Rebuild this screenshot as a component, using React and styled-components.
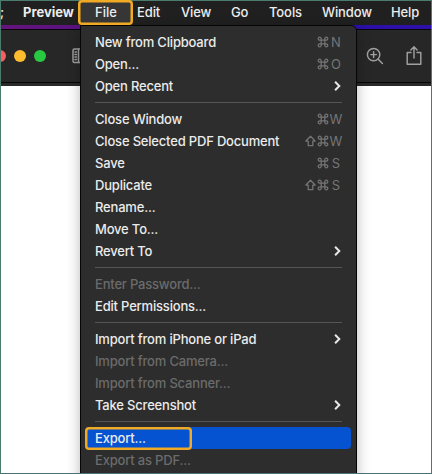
import React from "react";
import styled, { createGlobalStyle } from "styled-components";

const Global = createGlobalStyle`
  * { box-sizing: border-box; }
  body { margin: 0; overflow: hidden; font-family: Inter, "Liberation Sans", sans-serif; }
`;

const Screen = styled.main`
  position: relative;
  display: flex;
  flex-direction: column;
  width: 432px;
  height: 474px;
  overflow: hidden;
  background: #fff;
`;

const Frame = styled.div`
  position: absolute;
  inset: 0;
  border: 1px solid #4b7b6f;
  border-bottom-color: #4a7377;
  pointer-events: none;
`;

const MenuBar = styled.nav`
  display: flex;
  flex: none;
  height: 25px;
  background: #202020;
  color: #ececec;
  font-size: 13px;
  line-height: 25px;
  font-weight: 500;
  overflow: hidden;
`;

const BarItem = styled.span`
  flex: none;
  width: ${(p) => p.$width}px;
  font-weight: ${(p) => (p.$bold ? 700 : 500)};
  letter-spacing: ${(p) => (p.$bold ? 0 : -0.1)}px;
  white-space: nowrap;
`;

const Wallpaper = styled.div`
  flex: none;
  height: 5px;
  border-bottom: 1px solid #08040c;
  background: linear-gradient(90deg, #65147c 0, #5a1280 80px, #2c0fa6 355px, #2d10a8 100%);
`;

const Toolbar = styled.header`
  display: flex;
  align-items: center;
  flex: none;
  height: 53px;
  background: #272727;
  border-bottom: 1px solid #050505;
`;

const Light = styled.i`
  flex: none;
  width: 12px;
  height: 12px;
  margin-right: 8px;
  border-radius: 50%;
  background: ${(p) => p.$color};
`;

const Lights = styled.div`
  display: flex;
  width: 72px;
  margin-left: -6px;
`;

const ToolIcon = styled.svg`
  flex: none;
  margin-left: ${(p) => p.$gap}px;
  fill: none;
  stroke: #a0a0a0;
  stroke-width: 1.45;
  stroke-linecap: round;
  stroke-linejoin: round;
`;

const Edge = styled.div`
  flex: none;
  height: 3px;
  background: #292929;
`;

const Menu = styled.section`
  position: absolute;
  left: 80px;
  top: 25px;
  width: 277px;
  height: 460px;
  padding: 5px 5px 0;
  border: 1px solid #050505;
  border-radius: 0 6px 0 0;
  background: #2d2d2d;
  box-shadow: 0 4px 14px rgba(0, 0, 0, 0.28);
`;

const Row = styled.div`
  display: flex;
  align-items: center;
  height: 22px;
  padding: 0 8px 0 9px;
  border-radius: 4px;
  background: ${(p) => (p.$active ? "#0553d1" : "transparent")};
  color: ${(p) => (p.$disabled ? "#6b6b6b" : "#ebebeb")};
`;

const Label = styled.span`
  flex: 1;
  font-size: 13px;
  font-weight: 500;
  line-height: 22px;
  letter-spacing: -0.19px;
  white-space: nowrap;
`;

const Shortcut = styled.span`
  display: flex;
  align-items: center;
  color: #757575;
`;

const KeyLetter = styled.span`
  width: 14px;
  font-size: 13px;
  line-height: 22px;
  text-align: center;
`;

const KeyIcon = styled.svg`
  flex: none;
  fill: none;
  stroke: currentColor;
  stroke-width: 1.25;
`;

const Chevron = styled.svg`
  flex: none;
  margin-right: 2px;
  fill: none;
  stroke: #e8e8e8;
  stroke-width: 2;
`;

const Divider = styled.hr`
  height: 1px;
  margin: 5px 9px;
  border: 0;
  background: #565656;
`;

const Callout = styled.div`
  position: absolute;
  left: ${(p) => p.$left}px;
  top: ${(p) => p.$top}px;
  width: ${(p) => p.$width}px;
  height: ${(p) => p.$height}px;
  border-radius: 4px;
  box-shadow: inset 0 0 0 2.5px #f0aa23;
`;

const FileLit = styled.div`
  position: absolute;
  left: 80px;
  top: 1px;
  width: 52px;
  height: 23px;
  padding-left: 15px;
  background: #363636;
  color: #ececec;
  font-size: 13px;
  font-weight: 500;
  line-height: 23px;
`;

const bar = [
  ["Preview", 114, true],
  ["Edit", 44],
  ["View", 50],
  ["Go", 38],
  ["Tools", 53],
  ["Window", 69],
  ["Help", 41],
];

const items = [
  { t: "New from Clipboard", k: "N" },
  { t: "Open...", k: "O" },
  { t: "Open Recent", sub: true },
  null,
  { t: "Close Window", k: "W" },
  { t: "Close Selected PDF Document", k: "W", shift: true },
  { t: "Save", k: "S" },
  { t: "Duplicate", k: "S", shift: true },
  { t: "Rename..." },
  { t: "Move To..." },
  { t: "Revert To", sub: true },
  null,
  { t: "Enter Password...", off: true },
  { t: "Edit Permissions..." },
  null,
  { t: "Import from iPhone or iPad", sub: true },
  { t: "Import from Camera...", off: true },
  { t: "Import from Scanner...", off: true },
  { t: "Take Screenshot", sub: true },
  null,
  { t: "Export...", active: true },
  { t: "Export as PDF...", off: true },
];

const CommandKey = () => (
  <KeyIcon width="12" height="12" viewBox="0 0 12 12">
    <path d="M4.2 4.2h3.6v3.6H4.2zM4.2 4.2H2.8a1.5 1.5 0 1 1 1.4-1.5zM7.8 4.2V2.7a1.5 1.5 0 1 1 1.4 1.5zM7.8 7.8h1.4a1.5 1.5 0 1 1-1.4 1.5zM4.2 7.8v1.5a1.5 1.5 0 1 1-1.4-1.5z" />
  </KeyIcon>
);

const ShiftKey = () => (
  <KeyIcon width="12" height="12" viewBox="0 0 12 12">
    <path d="M5.5 1.2.9 6h2.3v4.7h4.6V6h2.3z" strokeLinejoin="round" />
  </KeyIcon>
);

export default function App() {
  return (
    <Screen>
      <Global />
      <MenuBar>
        <BarItem $width={23}>;</BarItem>
        {bar.map(([name, width, bold]) => (
          <BarItem key={name} $width={width} $bold={bold}>{name}</BarItem>
        ))}
      </MenuBar>
      <Wallpaper />
      <Toolbar>
        <Lights>
          <Light $color="#f9605c" />
          <Light $color="#fdbc2e" />
          <Light $color="#28c840" />
        </Lights>
        <ToolIcon $gap={6} width="18" height="16" viewBox="0 0 18 16">
          <rect x="1" y="1" width="16" height="13.5" rx="1.5" />
          <path d="M6.5 1v13.5M3 4h1.5M3 6.5h1.5M3 9h1.5M3 11.5h1.5" />
        </ToolIcon>
        <ToolIcon $gap={276} width="18" height="18" viewBox="0 0 18 18">
          <circle cx="7.6" cy="7.6" r="6.2" />
          <path d="m12.2 12.2 4.2 4.2M4.8 7.6h5.6M7.6 4.8v5.6" />
        </ToolIcon>
        <ToolIcon $gap={22} width="16" height="20" viewBox="0 0 16 20">
          <path d="M5 6.4H1.2v11.8h13.6V6.4H11M8 12V1M4.9 3.9 8 0.8l3.1 3.1" />
        </ToolIcon>
      </Toolbar>
      <Edge />
      <Menu>
        {items.map((item, i) =>
          item ? (
            <Row key={i} $active={item.active} $disabled={item.off}>
              <Label>{item.t}</Label>
              {item.sub && (
                <Chevron width="7" height="10" viewBox="0 0 7 10">
                  <path d="m1.1 0.8 4.2 4.2-4.2 4.2" />
                </Chevron>
              )}
              {item.k && (
                <Shortcut>
                  {item.shift && <ShiftKey />}
                  <CommandKey />
                  <KeyLetter>{item.k}</KeyLetter>
                </Shortcut>
              )}
            </Row>
          ) : (
            <Divider key={i} />
          )
        )}
      </Menu>
      <FileLit>File</FileLit>
      <Frame />
      <Callout $left={78} $top={0} $width={55} $height={25} />
      <Callout $left={85} $top={427} $width={107} $height={23} />
    </Screen>
  );
}
